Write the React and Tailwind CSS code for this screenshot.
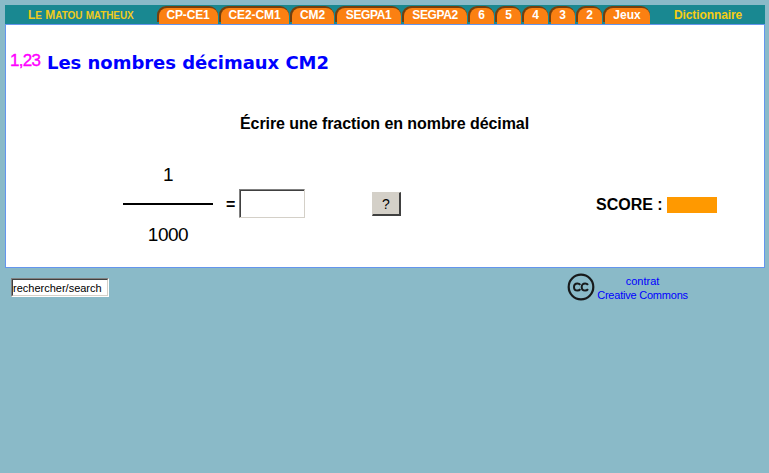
const tabs = [
  { label: 'CP-CE1', width: 'w-[62px]', fit: 'tracking-[-0.2px]' },
  { label: 'CE2-CM1', width: 'w-[71px]', fit: 'tracking-[-0.1px]' },
  { label: 'CM2', width: 'w-[45px]', fit: 'tracking-[-0.1px]' },
  { label: 'SEGPA1', width: 'w-[67px]', fit: 'tracking-[-0.4px]' },
  { label: 'SEGPA2', width: 'w-[66px]', fit: 'tracking-[-0.4px]' },
  { label: '6', width: 'w-[27px]', fit: '' },
  { label: '5', width: 'w-[27px]', fit: '' },
  { label: '4', width: 'w-[27px]', fit: '' },
  { label: '3', width: 'w-[27px]', fit: '' },
  { label: '2', width: 'w-[27px]', fit: '' },
  { label: 'Jeux', width: 'w-[48px]', fit: 'tracking-normal' },
];

function Tab({ label, width, fit }) {
  return (
    <a className={`${width} h-[18px] shrink-0 pr-px`}>
      <span className="block h-4 rounded-t-[9px] bg-[#733f0e]">
        <span
          className={`relative left-[2px] top-[2px] mr-[2px] flex h-4 items-center justify-center rounded-t-[8px] bg-[#fb8012] pr-px pb-[3px] text-[12px] leading-none font-bold whitespace-nowrap text-white ${fit}`}
        >
          {label}
        </span>
      </span>
    </a>
  );
}

function Header() {
  return (
    <header className="flex h-[19px] bg-[#198891]">
      <div className="w-[152px] pl-[23px] pt-[3px] text-[12px] leading-[14px] font-bold whitespace-nowrap text-[#f0cb1c]">
        L<span className="text-[10px] tracking-[-0.1px]">E</span> M
        <span className="text-[10px] tracking-[-0.1px]">ATOU</span>{' '}
        <span className="text-[10px] tracking-[-0.1px]">MATHEUX</span>
      </div>
      <nav className="flex pt-px">
        {tabs.map((tab) => (
          <Tab key={tab.label} {...tab} />
        ))}
      </nav>
      <a className="ml-[23px] pt-[3px] text-[12px] leading-[14px] font-bold tracking-[-0.1px] text-[#f7cd13]">Dictionnaire</a>
    </header>
  );
}

function Exercise() {
  return (
    <main className="h-[244px] border border-[#6495ed] bg-white text-black">
      <h1 className="flex pt-[24px] pl-1">
        <span className="w-[37px] pt-[2px] text-[17px] leading-5 tracking-[-0.7px] text-[#ff00ff] [-webkit-text-stroke:0.4px_#ff00ff]">
          1,23
        </span>
        <span className="pt-[3px] font-['DejaVu_Sans'] text-[18px] leading-[22px] font-bold tracking-[-0.03px] whitespace-nowrap text-[#0000ff]">
          Les nombres décimaux CM2
        </span>
      </h1>
      <h2 className="mt-[40px] pl-[234px] text-[16px] leading-5 font-bold tracking-[-0.07px] whitespace-nowrap">
        Écrire une fraction en nombre décimal
      </h2>
      <div className="mt-[31px] flex h-[80px] items-center">
        <div className="ml-[117px] w-[90px] text-center text-[19px] leading-5 tracking-[-0.5px]">
          <div>1</div>
          <div className="mt-[18px] h-[2px] bg-black" />
          <div className="mt-[20px]">1000</div>
        </div>
        <span className="ml-[13px] w-[13px] text-[16px] font-bold">=</span>
        <div className="mb-[3px] h-[29px] w-[66px] border border-t-[#808080] border-r-[#d4d0c8] border-b-[#d4d0c8] border-l-[#808080]">
          <div className="h-full border-t border-l border-[#404040]" />
        </div>
        <button className="mb-[2px] ml-[67px] h-[24px] w-[29px] border border-t-[#d4d0c8] border-r-2 border-r-[#404040] border-b-2 border-b-[#404040] border-l-[#d4d0c8] bg-[#d4d0c8] text-[14px] leading-none">
          ?
        </button>
        <span className="ml-[195px] w-[71px] text-[16px] font-bold whitespace-nowrap">SCORE :</span>
        <div className="h-4 w-[50px] bg-[#ff9900]" />
      </div>
    </main>
  );
}

function Footer() {
  return (
    <footer className="flex">
      <div className="mt-[10px] ml-[6px] h-[19px] w-[98px] border border-t-[#808080] border-r-white border-b-white border-l-[#808080]">
        <input
          className="block h-full w-full border border-t-[#404040] border-r-[#d4d0c8] border-b-[#d4d0c8] border-l-[#404040] bg-white text-[11px] leading-none text-black"
          defaultValue="rechercher/search"
        />
      </div>
      <svg className="mt-[5px] ml-[458px] h-[28px] w-[28px]" viewBox="0 0 28 28" fill="none" stroke="#171a1b">
        <circle cx="14" cy="14" r="12.3" strokeWidth="2.2" />
        <path
          d="M13.3 11.9C12.6 10.8 11.6 10.4 10.4 10.4C8.3 10.4 7 11.9 7 14C7 16.1 8.3 17.6 10.4 17.6C11.7 17.6 12.7 17 13.3 16.1M21 11.9C20.3 10.8 19.3 10.4 18.1 10.4C16 10.4 14.7 11.9 14.7 14C14.7 16.1 16 17.6 18.1 17.6C19.4 17.6 20.4 17 21 16.1"
          strokeWidth="2"
        />
      </svg>
      <a className="mt-[6px] ml-[2px] w-[91px] text-center text-[11px] leading-[14px] tracking-[-0.22px] whitespace-nowrap text-[#0000ff]">
        <span className="tracking-normal">contrat</span>
        <br />
        Creative Commons
      </a>
    </footer>
  );
}

export default function App() {
  return (
    <div className="h-[473px] w-[769px] overflow-hidden bg-[#8abac8] pt-[5px] pr-1 pl-[5px] font-['Liberation_Sans',sans-serif]">
      <Header />
      <Exercise />
      <Footer />
    </div>
  );
}
